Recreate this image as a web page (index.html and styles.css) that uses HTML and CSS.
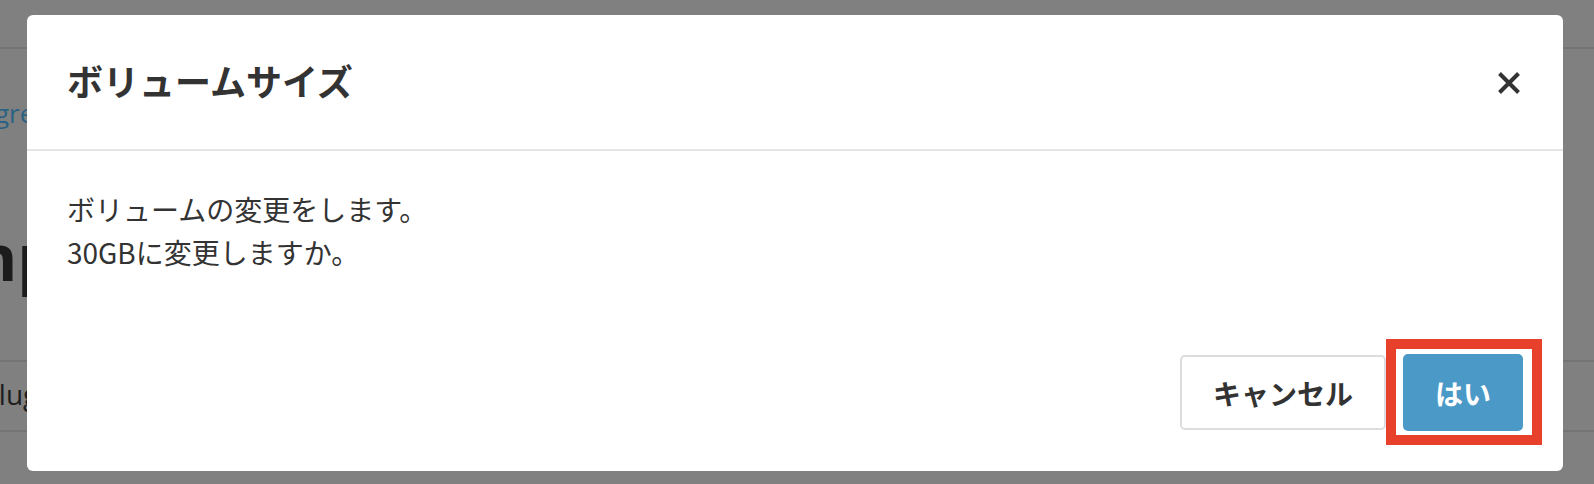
FILE: index.html
```html
<!DOCTYPE html>
<html lang="ja">
<head>
    <meta charset="UTF-8">
    <meta name="viewport" content="width=device-width, initial-scale=1.0">
    <title>ボリュームサイズ</title>
    <link rel="stylesheet" href="styles.css">
</head>
<body>
    <div class="page">
        <div class="topbar"></div>
        <div class="breadcrumb"><a href="#">Progress</a></div>
        <h1 class="page-title">Input</h1>
        <table class="list">
            <tr><td>Plugin</td></tr>
        </table>
    </div>

    <div class="backdrop">
        <div class="modal">
            <div class="modal-header">
                <h4 class="modal-title">ボリュームサイズ</h4>
                <button class="close" aria-label="閉じる">
                    <svg width="24" height="24" viewBox="0 0 24 24">
                        <path d="M2.5 2.5 L21.5 21.5 M21.5 2.5 L2.5 21.5" stroke="#333" stroke-width="4" fill="none"/>
                    </svg>
                </button>
            </div>
            <div class="modal-body">
                <p>ボリュームの変更をします。<br>30GBに変更しますか。</p>
            </div>
            <div class="modal-footer">
                <button class="btn btn-default">キャンセル</button>
                <div class="highlight-wrap">
                    <button class="btn btn-primary">はい</button>
                    <div class="highlight"></div>
                </div>
            </div>
        </div>
    </div>
</body>
</html>
```

FILE: styles.css
```css
body {
    margin: 0;
    background-color: #808080;
    font-family: 'Open Sans', sans-serif;
    overflow: hidden;
}

/* page behind the dialog (already dimmed) */
.topbar {
    height: 47px;
    border-bottom: 2px solid #747474;
}

.breadcrumb {
    margin-top: 47px;
    margin-left: -47px;
    font-size: 26px;
    line-height: 34px;
}

.breadcrumb a {
    color: #2a6283;
    text-decoration: none;
}

.page-title {
    margin: 92px 0 0 -46px;
    font-size: 64px;
    line-height: 70px;
    font-weight: 700;
    color: #1c1c1c;
}

.list {
    width: 100%;
    margin-top: 68px;
    border-collapse: collapse;
}

.list td {
    padding: 12px 0 16px;
    text-indent: -18px;
    font-size: 28px;
    line-height: 40px;
    color: #1e1e1e;
    border-top: 2px solid #747474;
    border-bottom: 2px solid #747474;
}

/* dialog */
.backdrop {
    position: fixed;
    top: 0;
    left: 0;
    right: 0;
    bottom: 0;
    padding: 15px 31px 0 27px;
}

.modal {
    background-color: white;
    border-radius: 6px;
    font-family: 'Noto Sans CJK JP', sans-serif;
    color: #333;
}

.modal-header {
    display: flex;
    justify-content: space-between;
    align-items: center;
    padding: 40px 42px 44px 40px;
    border-bottom: 2px solid #e5e5e5;
}

.modal-title {
    margin: 0;
    font-size: 36px;
    line-height: 50px;
    font-weight: 700;
}

.close {
    width: 24px;
    height: 24px;
    margin-top: 6px;
    padding: 0;
    border: none;
    background: none;
}

.close svg {
    display: block;
}

.modal-body {
    padding: 37px 40px 0;
}

.modal-body p {
    margin: 0;
    font-size: 28px;
    line-height: 43px;
}

.modal-footer {
    display: flex;
    justify-content: flex-end;
    align-items: center;
    gap: 17px;
    padding: 80px 40px 40px;
}

.btn {
    font-family: 'Noto Sans CJK JP', sans-serif;
    font-size: 28px;
    font-weight: 700;
    border-radius: 5px;
    cursor: pointer;
}

.btn-default {
    height: 75px;
    padding: 0 31px;
    background-color: white;
    border: 2px solid #dddddd;
    color: #333;
}

.btn-primary {
    display: block;
    height: 77px;
    padding: 0 32px;
    background-color: #4a99c7;
    border: none;
    color: white;
}

.highlight-wrap {
    position: relative;
}

.highlight {
    position: absolute;
    top: -15px;
    left: -17px;
    right: -19px;
    bottom: -14px;
    border: 10px solid #e8412b;
    pointer-events: none;
}
```
